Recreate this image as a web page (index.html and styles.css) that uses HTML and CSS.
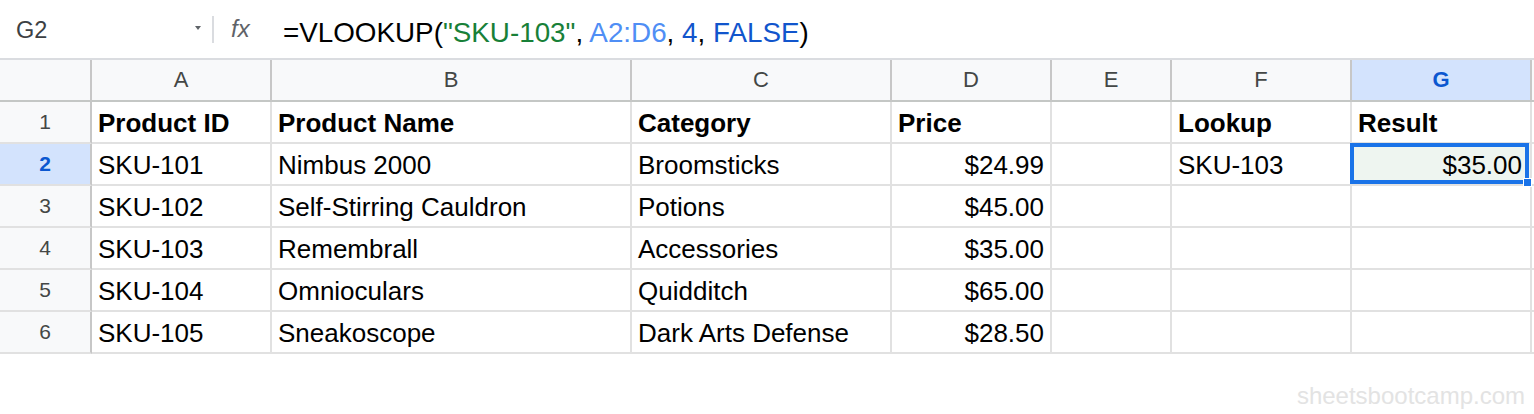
FILE: index.html
```html
<!DOCTYPE html>
<html>
<head>
<meta charset="utf-8">
<link rel="stylesheet" href="styles.css">
</head>
<body>
<div class="formula-bar">
  <div class="namebox"><span class="ref">G2</span><span class="caret"></span></div>
  <div class="sep"></div>
  <div class="fx">fx</div>
  <div class="formula">=VLOOKUP(<span class="str">"SKU-103"</span>, <span class="rng">A2:D6</span>, <span class="num">4</span>, <span class="num">FALSE</span>)</div>
</div>
<div class="sheet">
  <div class="ch corner"></div>
  <div class="ch">A</div>
  <div class="ch">B</div>
  <div class="ch">C</div>
  <div class="ch">D</div>
  <div class="ch">E</div>
  <div class="ch">F</div>
  <div class="ch active">G</div>
  <div class="ch"></div>

  <div class="rh">1</div>
  <div class="c b">Product ID</div>
  <div class="c b">Product Name</div>
  <div class="c b">Category</div>
  <div class="c b">Price</div>
  <div class="c"></div>
  <div class="c b">Lookup</div>
  <div class="c b">Result</div>
  <div class="c"></div>

  <div class="rh active">2</div>
  <div class="c">SKU-101</div>
  <div class="c">Nimbus 2000</div>
  <div class="c">Broomsticks</div>
  <div class="c r">$24.99</div>
  <div class="c"></div>
  <div class="c">SKU-103</div>
  <div class="c r sel">$35.00</div>
  <div class="c"></div>

  <div class="rh">3</div>
  <div class="c">SKU-102</div>
  <div class="c">Self-Stirring Cauldron</div>
  <div class="c">Potions</div>
  <div class="c r">$45.00</div>
  <div class="c"></div>
  <div class="c"></div>
  <div class="c"></div>
  <div class="c"></div>

  <div class="rh">4</div>
  <div class="c">SKU-103</div>
  <div class="c">Remembrall</div>
  <div class="c">Accessories</div>
  <div class="c r">$35.00</div>
  <div class="c"></div>
  <div class="c"></div>
  <div class="c"></div>
  <div class="c"></div>

  <div class="rh">5</div>
  <div class="c">SKU-104</div>
  <div class="c">Omnioculars</div>
  <div class="c">Quidditch</div>
  <div class="c r">$65.00</div>
  <div class="c"></div>
  <div class="c"></div>
  <div class="c"></div>
  <div class="c"></div>

  <div class="rh">6</div>
  <div class="c">SKU-105</div>
  <div class="c">Sneakoscope</div>
  <div class="c">Dark Arts Defense</div>
  <div class="c r">$28.50</div>
  <div class="c"></div>
  <div class="c"></div>
  <div class="c"></div>
  <div class="c"></div>
</div>
<div class="watermark">sheetsbootcamp.com</div>
</body>
</html>
```

FILE: styles.css
```css
* { box-sizing: border-box; }
html, body { margin: 0; padding: 0; background: #fff; }
body {
  font-family: "Liberation Sans", Arial, sans-serif;
  color: #000;
  width: 1534px;
  height: 414px;
  overflow: hidden;
}

.formula-bar {
  display: flex;
  align-items: flex-start;
  height: 60px;
  border-bottom: 2px solid #dadce0;
}
.namebox {
  width: 212px;
  display: flex;
  justify-content: space-between;
  align-items: flex-start;
  padding: 17px 11px 0 16px;
}
.ref {
  font-size: 23.5px;
  line-height: 26px;
  color: #3c4043;
}
.caret {
  width: 0;
  height: 0;
  margin-top: 9px;
  border-left: 3px solid transparent;
  border-right: 3px solid transparent;
  border-top: 4px solid #5f6368;
}
.sep {
  width: 2px;
  height: 27px;
  margin-top: 16px;
  background: #dadce0;
}
.fx {
  width: 69px;
  padding: 15px 0 0 17px;
  font-size: 24px;
  line-height: 28px;
  font-style: italic;
  color: #5f6368;
}
.formula {
  padding-top: 17px;
  font-size: 27.8px;
  line-height: 32px;
  color: #000;
  white-space: nowrap;
}
.str { color: #188038; }
.rng { color: #4f8ef5; }
.num { color: #1155cc; }

.sheet {
  display: grid;
  grid-template-columns: 92px 180px 360px 260px 160px 120px 180px 180px 1fr;
  grid-template-rows: 42px repeat(6, 42px);
}
.ch {
  background: #f8f9fa;
  border-right: 2px solid #c7c7c7;
  border-bottom: 2px solid #c4c7c5;
  display: flex;
  align-items: center;
  justify-content: center;
  font-size: 22px;
  color: #444746;
}
.ch.active {
  background: #d3e3fd;
  color: #0b57d0;
  font-weight: bold;
}
.rh {
  background: #f8f9fa;
  border-right: 2px solid #c7c7c7;
  border-bottom: 2px solid #e1e1e1;
  display: flex;
  align-items: center;
  justify-content: center;
  font-size: 21px;
  color: #444746;
}
.rh.active {
  background: #d3e3fd;
  color: #0b57d0;
  font-weight: bold;
}
.c {
  border-right: 2px solid #e1e1e1;
  border-bottom: 2px solid #e1e1e1;
  display: flex;
  align-items: flex-end;
  padding: 0 6px 4px 6px;
  font-size: 26px;
  line-height: 30px;
  white-space: nowrap;
}
.c.b { font-weight: bold; }
.c.r { justify-content: flex-end; }
.c.sel {
  position: relative;
  background: #eef5f0;
  padding-right: 8px;
}
.c.sel::after {
  content: "";
  position: absolute;
  top: -1px;
  left: -2px;
  right: 1px;
  bottom: 0;
  border: 4px solid #1a73e8;
}
.c.sel::before {
  content: "";
  position: absolute;
  right: -2px;
  bottom: -3px;
  width: 7px;
  height: 7px;
  background: #1a73e8;
  border: 1px solid #fff;
  z-index: 1;
}

.watermark {
  margin-top: 28px;
  padding-right: 9px;
  text-align: right;
  font-size: 24px;
  line-height: 28px;
  color: #e3e3e3;
}
```
